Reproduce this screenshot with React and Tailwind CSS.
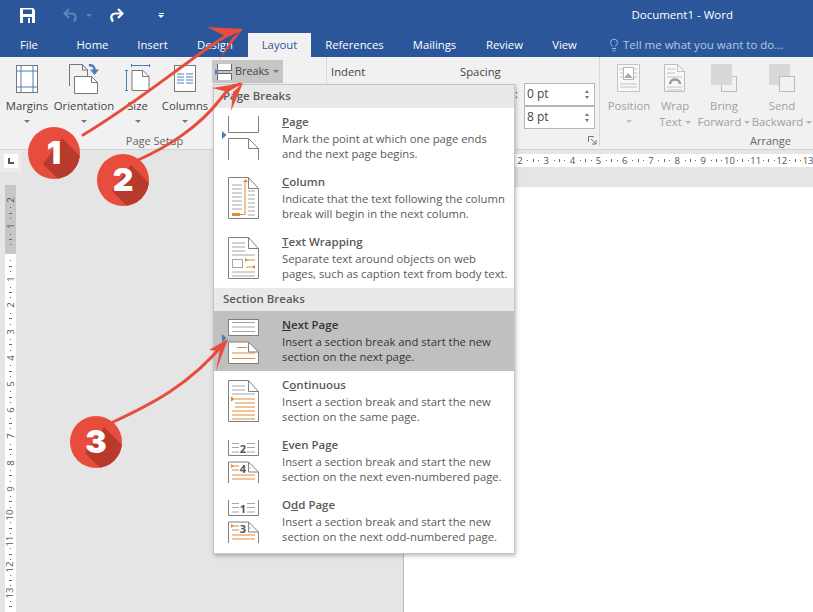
import React from "react";
import { Lightbulb } from "lucide-react";

const font = "font-['Open_Sans','Liberation_Sans',sans-serif]";

function Caret({ className = "" }) {
  return (
    <span
      className={
        "inline-block w-0 h-0 border-x-[3px] border-x-transparent border-t-[3px] border-t-[#777] " +
        className
      }
    />
  );
}

// Quick access toolbar
function SaveIcon() {
  return (
    <svg width="15" height="15" viewBox="0 0 15 15">
      <path d="M0 0h13l2 2v13H0z" fill="#fff" />
      <rect x="3" y="1.500" width="9" height="4.500" fill="#2b579a" />
      <rect x="3" y="9" width="9" height="6" fill="#2b579a" />
      <rect x="8" y="10" width="2" height="5" fill="#fff" />
    </svg>
  );
}

function TurnIcon({ flip, color }) {
  return (
    <svg width="16" height="15" viewBox="0 0 16 15" className={flip ? "-scale-x-100" : ""}>
      <path d="M6 1 1.500 5.500 6 10" fill="none" stroke={color} strokeWidth="2.200" />
      <path d="M2 5.500h6c5 0 6 4 3 8" fill="none" stroke={color} strokeWidth="2.200" />
    </svg>
  );
}

// Ribbon icons
const blue = "#4a7ebb";
const line = "#777";

function MarginsIcon() {
  return (
    <svg width="24" height="30" viewBox="0 0 24 30">
      <rect x="1.5" y="1.5" width="21" height="27" fill="#fff" stroke={line} />
      <path d="M6 2v26M18 2v26M2 7h20M2 23h20" stroke={blue} />
    </svg>
  );
}

function OrientationIcon() {
  return (
    <svg width="30" height="30" viewBox="0 0 30 30">
      <path d="M.5 22V.5h13l5 5.500V12" fill="none" stroke={line} />
      <path d="M13.500.5v5.500h5" fill="none" stroke={line} />
      <path d="M5.500 29.500v-17h17l6 6v11z" fill="#fff" stroke={line} />
      <path d="M22.500 12.500v6h6" fill="none" stroke={line} />
      <path d="M20 1.500c3-1 6 1 5.500 5" fill="none" stroke={blue} strokeWidth="2.500" />
      <path d="M21 5.500h9L25.500 11z" fill={blue} />
    </svg>
  );
}

function SizeIcon() {
  return (
    <svg width="25" height="27" viewBox="0 0 25 27">
      <path d="M7 1.500h17M6.500 0v3M24.500 0v3M1.500 6v21M0 6.500h3M0 26.500h3" stroke={blue} fill="none" />
      <path d="M7 26.500V6.500h11l6 6v14z" fill="#fff" stroke={line} />
      <path d="M17.500 6.500v6h6.500" fill="none" stroke={line} />
    </svg>
  );
}

function ColumnsIcon() {
  return (
    <svg width="24" height="29" viewBox="0 0 24 29">
      <rect x="1.5" y="1.5" width="21" height="26" fill="#fff" stroke={line} />
      <path
        d="M4 10h7M13 10h7M4 13h7M13 13h7M4 16h7M13 16h7M4 19h7M13 19h7"
        stroke={blue}
      />
    </svg>
  );
}

function PositionIcon() {
  return (
    <svg width="24" height="28" viewBox="0 0 24 28">
      <rect x=".5" y=".5" width="22" height="27" fill="#f7f7f7" stroke="#c4c4c4" />
      <path d="M3 5h3M17 5h3M3 9h3M17 9h3M3 13h3M17 13h3M3 20h17M3 23h17" stroke="#c4c4c4" />
      <rect x="6.500" y="3.500" width="10" height="12" fill="#fff" stroke="#b5b5b5" />
      <path d="M7 14l4-5 5 5z" fill="#aaa" />
    </svg>
  );
}

function WrapIcon() {
  return (
    <svg width="22" height="28" viewBox="0 0 22 28">
      <path d="M.5 27.500V.5h13l7 7v20z" fill="#f7f7f7" stroke="#bdbdbd" />
      <path d="M13.500.5v7h7M3 5h8M3 9h8M3 13h15M3 23h15M3 26h15" fill="none" stroke="#c4c4c4" />
      <path d="M6 20c0-6 10-6 10 0" fill="none" stroke="#999" strokeWidth="2.500" />
    </svg>
  );
}

function LayerIcon({ back }) {
  return (
    <svg width="27" height="28" viewBox="0 0 27 28">
      {back ? (
        <>
          <rect x="0" y="0" width="21" height="21" fill="#d9d7d9" />
          <rect x="10.500" y="12.500" width="15" height="15" fill="#f1f1f1" stroke="#bbb" />
        </>
      ) : (
        <>
          <path d="M10.500 21v6.500h15v-15H21" fill="none" stroke="#bbb" />
          <rect x="0" y="0" width="21" height="21" fill="#d9d7d9" />
        </>
      )}
    </svg>
  );
}

function RibbonButton({ icon, label, second, width, disabled }) {
  const text = disabled ? "text-[#a0a0a0]" : "text-[#444]";
  return (
    <div className={"flex flex-col items-center shrink-0 " + width}>
      <div className="h-[41px] pt-[7px] flex items-start justify-center">{icon}</div>
      <span className={"text-[11.3px] leading-[16px] whitespace-nowrap " + text}>{label}</span>
      {second ? (
        <span className={"text-[11.3px] leading-[16px] whitespace-nowrap flex items-center gap-[3px] " + text}>
          {second}
          <Caret className="opacity-50" />
        </span>
      ) : (
        <span className="h-[14px] flex items-center">
          <Caret className={disabled ? "opacity-40" : ""} />
        </span>
      )}
    </div>
  );
}

function BreaksIcon() {
  return (
    <svg width="17" height="16" viewBox="0 0 17 16">
      <path d="M0 5l3.500 3L0 11z" fill={blue} />
      <path d="M2.500 0v6.500h14V0M2.500 16V9.500h14V16" fill="#fff" stroke="#666" />
    </svg>
  );
}

function Spinner({ value }) {
  return (
    <div className="w-[71px] h-[23px] border border-[#b5b5b5] bg-white flex items-center justify-between pl-[2px] pr-[5px]">
      <span className="text-[12px] text-[#444]">{value}</span>
      <div className="flex flex-col gap-[3px]">
        <span className="w-0 h-0 border-x-[2.500px] border-x-transparent border-b-[3px] border-b-[#777]" />
        <span className="w-0 h-0 border-x-[2.500px] border-x-transparent border-t-[3px] border-t-[#777]" />
      </div>
    </div>
  );
}

function Ribbon() {
  return (
    <div className="flex h-[93px] bg-[#f1f1f1] border-b border-[#d4d4d4] shrink-0">
      {/* PAGE SETUP */}
      <div className="w-[327px] flex flex-col border-r border-[#d8d8d8]">
        <div className="flex flex-1">
          <RibbonButton width="w-[54px]" icon={<MarginsIcon />} label="Margins" />
          <RibbonButton width="w-[60px]" icon={<OrientationIcon />} label="Orientation" />
          <RibbonButton width="w-[47px]" icon={<SizeIcon />} label="Size" />
          <RibbonButton width="w-[48px]" icon={<ColumnsIcon />} label="Columns" />
          <div className="ml-[3px] mt-[3px] w-[71px] h-[23px] bg-[#c6c6c6] flex items-center pl-[3px] text-[10.8px] text-[#444]">
            <BreaksIcon />
            <span className="ml-[3px]">Breaks</span>
            <Caret className="ml-[4px]" />
          </div>
        </div>
        <div className="text-[11px] leading-[14px] text-[#666] text-center pr-[17px] mb-[1px]">Page Setup</div>
      </div>

      {/* PARAGRAPH */}
      <div className="w-[273px] flex flex-col border-r border-[#d8d8d8] mb-[3px]">
        <div className="flex pt-[7px] text-[11.3px] text-[#444]">
          <span className="ml-[4px] w-[129px]">Indent</span>
          <span>Spacing</span>
        </div>
        <div className="flex flex-col mt-[2px] items-end pr-[4px]">
          <div className="flex items-center gap-[6px]">
            <span className="text-[11px] text-[#444]">:</span>
            <Spinner value="0 pt" />
          </div>
          <Spinner value="8 pt" />
        </div>
        <div className="flex-1 flex items-end justify-end pr-[2px] pb-[1px]">
          <svg width="9" height="9" viewBox="0 0 9 9">
            <path d="M.5 6V.5H6M3 3l5 5M8 4v4H4" fill="none" stroke="#777" />
          </svg>
        </div>
      </div>

      {/* ARRANGE */}
      <div className="flex-1 flex flex-col">
        <div className="flex flex-1 pl-[4px]">
          <RibbonButton disabled width="w-[50px]" icon={<PositionIcon />} label="Position" />
          <RibbonButton disabled width="w-[42px]" icon={<WrapIcon />} label="Wrap" second="Text" />
          <RibbonButton disabled width="w-[56px]" icon={<LayerIcon />} label="Bring" second="Forward" />
          <RibbonButton disabled width="w-[60px]" icon={<LayerIcon back />} label="Send" second="Backward" />
        </div>
        <div className="text-[11px] leading-[14px] text-[#666] text-center pl-[128px] mb-[1px]">Arrange</div>
      </div>
    </div>
  );
}

// Rulers
function RulerCell({ label, vertical }) {
  const parts = (
    <>
      <span
        className={
          "flex items-center justify-center whitespace-nowrap text-[9.500px] leading-none text-[#555] " +
          (vertical ? "h-[6px] -rotate-90" : "w-[6px]")
        }
      >
        {label}
      </span>
      <span className="w-[1px] h-[1px] bg-[#666]" />
      <span className={vertical ? "w-[3px] h-[1px] bg-[#666]" : "w-[1px] h-[3px] bg-[#666]"} />
      <span className="w-[1px] h-[1px] bg-[#666]" />
    </>
  );
  return vertical ? (
    <div className="h-[26.2px] shrink-0 flex flex-col items-center justify-between pb-[4px]">{parts}</div>
  ) : (
    <div className="w-[26.2px] shrink-0 flex items-center justify-between pr-[4px]">{parts}</div>
  );
}

const upper = [2, 1];
const lower = ["", 1, 2, 3, 4, 5, 6, 7, 8, 9, 10, 11, 12, 13];
const across = [2, 3, 4, 5, 6, 7, 8, 9, 10, 11, 12, 13];

function VerticalRuler() {
  return (
    <div className="w-[22px] shrink-0 flex flex-col">
      <div className="h-[22px] bg-[#ebebeb] flex items-center justify-center">
        <div className="w-[14px] h-[14px] bg-white flex items-center justify-center">
          <span className="w-[6px] h-[6px] border-l-2 border-b-2 border-[#555]" />
        </div>
      </div>
      <div className="mt-[13px] ml-[5px] w-[11px] flex-1 flex flex-col overflow-hidden">
        <div className="h-[69px] shrink-0 bg-[#c6c6c6] pt-[12px] overflow-hidden">
          {upper.map((n) => (
            <RulerCell key={n} label={n} vertical />
          ))}
        </div>
        <div className="flex-1 bg-white overflow-hidden">
          <div className="-mt-[4px]">
            {lower.map((n, i) => (
              <RulerCell key={i} label={n} vertical />
            ))}
          </div>
        </div>
      </div>
    </div>
  );
}

function DocArea() {
  return (
    <div className="flex flex-1 min-h-0 bg-[#e5e5e5]">
      <VerticalRuler />
      <div className="flex-1 flex flex-col min-w-0">
        <div className="ml-[381px] mt-[4px] h-[13px] bg-white flex pl-[114px] overflow-hidden">
          {across.map((n) => (
            <RulerCell key={n} label={n} />
          ))}
        </div>
        <div className="ml-[381px] mt-[20px] flex-1 bg-white border-l border-[#bdbdbd]" />
      </div>
    </div>
  );
}

// Menu page pictures. Coordinates: x 2-33 is the page, -4..0 the blue marker.
const gray = "#a6a6a6";
const edge = "#7f7f7f";
const orange = "#e08a3c";

function Hlines({ x1 = 6, x2 = 29, ys, color = gray }) {
  return (
    <path d={ys.map((y) => `M${x1} ${y}H${x2}`).join("")} stroke={color} fill="none" />
  );
}

function Marker({ y }) {
  return <path d={`M-4 ${y - 4}l4.500 4-4.500 4z`} fill={blue} />;
}

function TopSheet({ closed, fill = "none", y1 = 3.5, y2 = 19.5 }) {
  return closed ? (
    <rect x="2.500" y={y1} width="30" height={y2 - y1} fill={fill} stroke={edge} />
  ) : (
    <path d={`M2.500 ${y1}V${y2}H32.500V${y1}`} fill={fill} stroke={edge} />
  );
}

function BottomSheet({ closed, fill = "none", y1 = 25.5, y2 = 47.5 }) {
  return (
    <>
      <path
        d={`M2.500 ${y2}V${y1}H22.500L32.500 ${y1 + 10}V${y2}${closed ? "Z" : ""}`}
        fill={fill}
        stroke={edge}
      />
      <path d={`M22.500 ${y1}V${y1 + 10}H32.500`} fill="none" stroke={edge} />
    </>
  );
}

function WholeSheet({ children, y1 = 4.500 }) {
  return (
    <>
      <path
        d={`M2.500 ${y1 + 41}V${y1}H22.500L32.500 ${y1 + 11}V${y1 + 41}Z`}
        fill="#fff"
        stroke={edge}
      />
      <path d={`M22.500 ${y1}V${y1 + 11}H32.500`} fill="none" stroke={edge} />
      {children}
    </>
  );
}

function Pic({ children }) {
  return (
    <svg width="42" height="52" viewBox="-6 0 42 52" className="shrink-0 mt-[5px]">
      {children}
    </svg>
  );
}

function PagePic() {
  return (
    <Pic>
      <TopSheet y1={3} y2={19.5} />
      <BottomSheet y1={25.5} y2={47} />
      <Marker y={22} />
    </Pic>
  );
}

function ColumnPic() {
  return (
    <Pic>
      <WholeSheet>
        <Hlines x2={16} ys={[12, 16, 20, 24, 28, 32, 36]} />
        <Hlines x1={22} ys={[18, 22, 26, 30, 34, 38, 42]} />
        <path d="M19 9V41.500H8" fill="none" stroke={orange} />
        <rect x="6" y="40" width="8" height="3" fill={orange} />
        <path d="M17 9h5l-2.500-3z" fill={orange} />
      </WholeSheet>
    </Pic>
  );
}

function WrapPic() {
  return (
    <Pic>
      <WholeSheet>
        <Hlines x2={19} ys={[10, 14, 18]} />
        <Hlines ys={[22, 39, 43]} />
        <rect x="6.500" y="26.500" width="10" height="8" fill="#fff" stroke={gray} />
        <path d="M20 27h9M20 34h9" stroke={orange} />
        <path d="M19 25l3 2-3 2zM29 32l-3 2 3 2z" fill={orange} />
      </WholeSheet>
    </Pic>
  );
}

function NextPic() {
  return (
    <Pic>
      <TopSheet closed fill="#fff" />
      <Hlines ys={[6.500, 11, 15.500]} />
      <BottomSheet closed fill="#fff" y1={26} y2={47.500} />
      <Hlines x1={11} x2={21} ys={[31.500]} color={orange} />
      <Hlines ys={[37, 42.500]} color={orange} />
      <Marker y={22} />
    </Pic>
  );
}

function ContinuousPic() {
  return (
    <Pic>
      <WholeSheet>
        <Hlines x2={19} ys={[10, 14]} />
        <Hlines ys={[18]} />
        <path d="M5 20.500l4 2.500-4 2.500z" fill={orange} />
        <Hlines x1={9} ys={[23, 27, 31]} color={orange} />
        <Hlines ys={[35, 39, 43]} color={orange} />
      </WholeSheet>
    </Pic>
  );
}

function NumberPic({ top, bottom }) {
  return (
    <Pic>
      <TopSheet y1={4} y2={19.5} />
      <Hlines x1={6} x2={13} ys={[7.500, 11.500, 16]} />
      <Hlines x1={21} x2={29} ys={[7.500, 11.500, 16]} />
      <text x="17" y="16.500" textAnchor="middle" fontSize="11" fontWeight="700" fill="#555">
        {top}
      </text>
      <BottomSheet y1={26} y2={47} />
      <Hlines x1={6} x2={13} ys={[30, 34]} color={orange} />
      <path d="M5 28l3 2-3 2z" fill={orange} />
      <Hlines x1={22} x2={25} ys={[32]} />
      <text x="17" y="36.500" textAnchor="middle" fontSize="11" fontWeight="700" fill="#555">
        {bottom}
      </text>
      <Hlines ys={[39, 43]} color={orange} />
    </Pic>
  );
}

function MenuHeader({ children }) {
  return (
    <div className="h-[23px] bg-[#e9e9e9] flex items-center pl-[9px] pb-[2px] text-[11.5px] font-semibold text-[#5a5a5a]">
      {children}
    </div>
  );
}

function MenuItem({ pic, title, lines, active }) {
  const tone = active ? "text-[#333]" : "";
  return (
    <div className={"h-[60px] flex pl-[6px] " + (active ? "bg-[#c0c0c0]" : "")}>
      {pic}
      <div className="ml-[20px] pt-[5px] text-[#5a5a5a] whitespace-nowrap">
        <div className={"text-[11.5px] leading-[18px] font-semibold " + tone}>{title}</div>
        <div className={"text-[11.3px] leading-[15px] " + tone}>{lines[0]}</div>
        <div className={"text-[11.3px] leading-[15px] " + tone}>{lines[1]}</div>
      </div>
    </div>
  );
}

function BreaksMenu() {
  return (
    <div className="absolute left-[213px] top-[84px] w-[302px] h-[470px] bg-white border border-[#c6c6c6] shadow-[1px_2px_4px_rgba(0,0,0,0.25)]">
      <MenuHeader>Page Breaks</MenuHeader>
      <MenuItem
        pic={<PagePic />}
        title={<><u>P</u>age</>}
        lines={["Mark the point at which one page ends", "and the next page begins."]}
      />
      <MenuItem
        pic={<ColumnPic />}
        title={<><u>C</u>olumn</>}
        lines={["Indicate that the text following the column", "break will begin in the next column."]}
      />
      <MenuItem
        pic={<WrapPic />}
        title={<><u>T</u>ext Wrapping</>}
        lines={["Separate text around objects on web", "pages, such as caption text from body text."]}
      />
      <MenuHeader>Section Breaks</MenuHeader>
      <MenuItem
        active
        pic={<NextPic />}
        title={<><u>N</u>ext Page</>}
        lines={["Insert a section break and start the new", "section on the next page."]}
      />
      <MenuItem
        pic={<ContinuousPic />}
        title={<>C<u>o</u>ntinuous</>}
        lines={["Insert a section break and start the new", "section on the same page."]}
      />
      <MenuItem
        pic={<NumberPic top="2" bottom="4" />}
        title={<><u>E</u>ven Page</>}
        lines={["Insert a section break and start the new", "section on the next even-numbered page."]}
      />
      <MenuItem
        pic={<NumberPic top="1" bottom="3" />}
        title={<>O<u>d</u>d Page</>}
        lines={["Insert a section break and start the new", "section on the next odd-numbered page."]}
      />
    </div>
  );
}

// Red tutorial annotations
function Arrows() {
  const red = "#e74c3c";
  return (
    <svg className="absolute inset-0 pointer-events-none" width="813" height="612" viewBox="0 0 813 612">
      <g fill="none" stroke={red} strokeLinecap="round">
        <path d="M83 135C120 113 150 90 187 63S225 36 240 30" strokeWidth="3" />
        <path d="M138 160C170 146 200 125 218 102S232 88 240 84" strokeWidth="3" />
        <path d="M113 422C150 405 190 385 225 342" strokeWidth="3" />
      </g>
      <g fill={red}>
        <path d="M243 29 207 27 225 36z" />
        <path d="M243 29 219 60 232 38z" />
        <path d="M243 83 212 88 228 92z" />
        <path d="M243 83 231 111 233 92z" />
        <path d="M228 339 209 350 222 351z" />
        <path d="M228 339 216 371 220 349z" />
      </g>
    </svg>
  );
}

function Badge({ n, position }) {
  return (
    <div className={"absolute w-[52px] h-[52px] rounded-full bg-[#e74c3c] overflow-hidden flex items-center justify-center " + position}>
      <svg className="absolute inset-0" width="52" height="52" viewBox="0 0 52 52">
        <path d="M34 11 60 37 38 60 15 37z" fill="#b83a2c" />
      </svg>
      <span className="relative font-['Inter',sans-serif] font-black text-[32px] leading-none text-white">{n}</span>
    </div>
  );
}

const tabs = [
  ["Home", "w-[61px]"],
  ["Insert", "w-[59px]"],
  ["Design", "w-[66px]"],
];
const moreTabs = [
  ["References", "w-[87px]"],
  ["Mailings", "w-[73px]"],
  ["Review", "w-[67px]"],
  ["View", "w-[53px]"],
];

export default function App() {
  return (
    <div className={"relative w-[813px] h-[612px] overflow-hidden flex flex-col bg-[#e5e5e5] " + font}>
      {/* TITLE BAR */}
      <div className="h-[30px] shrink-0 bg-[#2b579a] flex items-center text-white">
        <div className="ml-[20px]">
          <SaveIcon />
        </div>
        <div className="ml-[28px]">
          <TurnIcon color="#5f82b8" />
        </div>
        <Caret className="ml-[7px] !border-t-[#5f82b8]" />
        <div className="ml-[16px]">
          <TurnIcon flip color="#fff" />
        </div>
        <div className="ml-[34px] flex flex-col items-center gap-[1px]">
          <span className="w-[5px] h-[1px] bg-white" />
          <span className="w-0 h-0 border-x-[3px] border-x-transparent border-t-[3px] border-t-white" />
        </div>
        <div className="ml-auto mr-[80px] text-[11.5px]">Document1 - Word</div>
      </div>

      {/* TABS */}
      <div className="h-[27px] shrink-0 bg-[#2b579a] flex text-[11.3px] text-white">
        <div className="w-[62px] pl-[20px] leading-[30px]">File</div>
        {tabs.map(([name, w]) => (
          <div key={name} className={"text-center leading-[30px] " + w}>{name}</div>
        ))}
        <div className="mt-[3px] w-[63px] text-center leading-[24px] bg-[#f1f1f1] text-[#2b579a]">Layout</div>
        {moreTabs.map(([name, w]) => (
          <div key={name} className={"text-center leading-[30px] " + w}>{name}</div>
        ))}
        <div className="ml-[16px] flex items-center gap-[2px] text-[#b5c7e2] pt-[3px] text-[11.5px]">
          <Lightbulb size={14} strokeWidth={1.5} />
          <span>Tell me what you want to do...</span>
        </div>
      </div>

      <Ribbon />
      <DocArea />

      <BreaksMenu />
      <Arrows />
      <Badge n="1" position="left-[28px] top-[127px]" />
      <Badge n="2" position="left-[97px] top-[154px]" />
      <Badge n="3" position="left-[70px] top-[416px]" />
    </div>
  );
}
